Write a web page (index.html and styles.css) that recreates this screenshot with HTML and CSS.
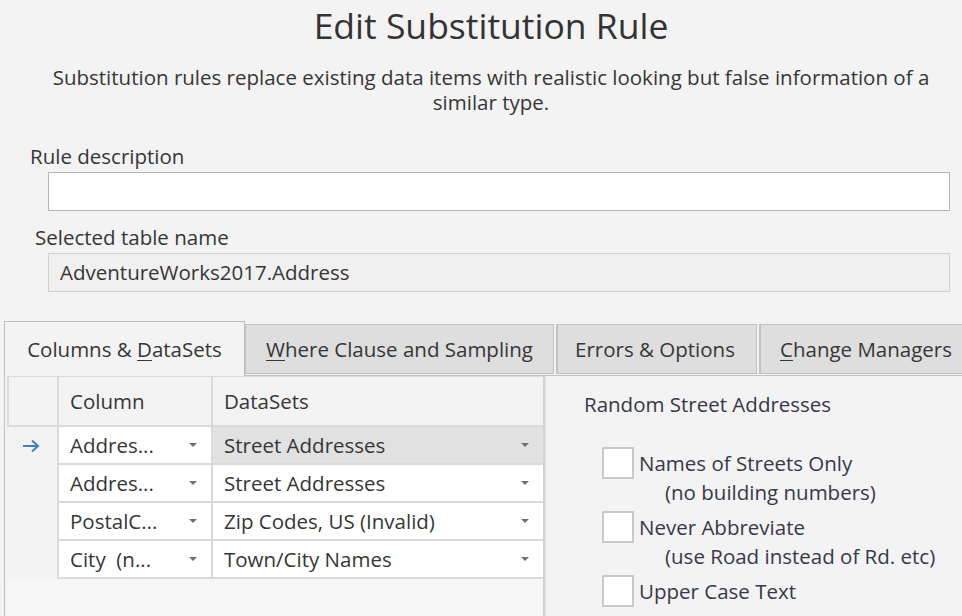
FILE: index.html
```html
<!DOCTYPE html>
<html>
<head>
<meta charset="utf-8">
<link rel="stylesheet" href="styles.css">
</head>
<body>
<div class="dialog">
  <header class="header">
    <h1 class="title">Edit Substitution Rule</h1>
    <p class="subtitle">Substitution rules replace existing data items with realistic looking but false information of a<br>similar type.</p>
  </header>
  <section class="fields">
    <div class="label label-rule">Rule description</div>
    <div class="textbox"></div>
    <div class="label label-table">Selected table name</div>
    <div class="textbox readonly">AdventureWorks2017.Address</div>
  </section>
  <section class="tabs">
    <div class="tabstrip">
      <div class="tab active">Columns &amp; <u>D</u>ataSets</div>
      <div class="tab t-where"><u>W</u>here Clause and Sampling</div>
      <div class="tab t-errors">Errors &amp; Options</div>
      <div class="tab t-change"><u>C</u>hange Managers</div>
    </div>
    <div class="panel">
      <div class="grid">
        <div class="cell rh head"></div>
        <div class="cell head">Column</div>
        <div class="cell head">DataSets</div>

        <div class="cell rh"><svg class="arrow" width="18" height="14" viewBox="0 0 18 14"><path d="M1 7H16M10 1.5L16 7L10 12.5" fill="none" stroke="#3b7fd4" stroke-width="2"/></svg></div>
        <div class="cell data"><span>Addres...</span><i class="dd"></i></div>
        <div class="cell data sel"><span>Street Addresses</span><i class="dd"></i></div>

        <div class="cell rh"></div>
        <div class="cell data"><span>Addres...</span><i class="dd"></i></div>
        <div class="cell data"><span>Street Addresses</span><i class="dd"></i></div>

        <div class="cell rh"></div>
        <div class="cell data"><span>PostalC...</span><i class="dd"></i></div>
        <div class="cell data"><span>Zip Codes, US (Invalid)</span><i class="dd"></i></div>

        <div class="cell rh"></div>
        <div class="cell data"><span>City&nbsp; (n...</span><i class="dd"></i></div>
        <div class="cell data"><span>Town/City Names</span><i class="dd"></i></div>
      </div>
      <div class="options">
        <div class="opt-title">Random Street Addresses</div>
        <div class="check">
          <span class="box"></span>
          <div class="check-text">Names of Streets Only<span class="sub">(no building numbers)</span></div>
        </div>
        <div class="check">
          <span class="box"></span>
          <div class="check-text">Never Abbreviate<span class="sub">(use Road instead of Rd. etc)</span></div>
        </div>
        <div class="check">
          <span class="box"></span>
          <div class="check-text">Upper Case Text</div>
        </div>
      </div>
    </div>
  </section>
</div>
</body>
</html>
```
FILE: styles.css
```css
html, body {
  margin: 0;
  padding: 0;
  background: #f3f3f3;
}
body {
  width: 962px;
  height: 616px;
  overflow: hidden;
  font-family: "Open Sans", "Noto Sans", sans-serif;
  color: #363636;
}
.dialog {
  width: 982px;
}
.header {
  text-align: center;
}
.title {
  margin: 0;
  padding-top: 2px;
  font-weight: normal;
  font-size: 35.5px;
  line-height: 46px;
  color: #333;
}
.subtitle {
  margin: 17px 0 0;
  font-size: 20.5px;
  line-height: 25px;
}
.fields {
  display: flex;
  flex-direction: column;
  padding-top: 28px;
}
.label {
  font-size: 20.5px;
  line-height: 26px;
}
.label-rule {
  margin-left: 30px;
}
.label-table {
  margin-left: 35px;
  margin-top: 13px;
}
.textbox {
  margin: 3px 0 0 48px;
  width: 900px;
  height: 37px;
  border: 1px solid #b4b4b4;
  background: #fff;
  box-sizing: content-box;
}
.textbox.readonly {
  margin-top: 3px;
  background: #f0f0f0;
  border-color: #cfcfcf;
  height: 37px;
  font-size: 20.5px;
  line-height: 37px;
  padding-left: 11px;
  width: 889px;
}
.tabs {
  margin-top: 29px;
  margin-left: 4px;
}
.tabstrip {
  display: flex;
  align-items: flex-end;
  height: 55px;
}
.tab {
  font-size: 20.5px;
  box-sizing: border-box;
  height: 50px;
  line-height: 48px;
  border: 1px solid #c2c2c2;
  background: #dedede;
  text-align: center;
  white-space: nowrap;
  margin-bottom: 2px;
}
.tab.active {
  width: 241px;
  height: 55px;
  line-height: 54px;
  background: #f3f3f3;
  border-color: #bdbdbd;
  border-bottom: none;
  margin-bottom: 0;
  position: relative;
  z-index: 1;
}
.t-where { width: 309px; }
.t-errors { width: 201px; margin-left: 2px; border-left-width: 2px; padding-right: 4px; }
.t-change { width: 210px; margin-left: 2px; border-left-width: 2px; text-align: left; padding-left: 19px; }
.tab u {
  text-decoration-thickness: 1px;
  text-underline-offset: 3px;
}
.panel {
  display: flex;
  border-left: 1px solid #bdbdbd;
  border-top: 1px solid #c2c2c2;
  margin-top: -1px;
  height: 240px;
}
.grid {
  margin-left: 2px;
  display: grid;
  grid-template-columns: 50px 154px 332px;
  grid-template-rows: 51px 38px 38px 38px 38px;
  align-self: flex-start;
  border-right: 2px solid #d2d2d2;
  height: 240px;
  align-content: start;
  box-sizing: border-box;
  background: #f6f6f6;
}
.cell {
  box-sizing: border-box;
  border-left: 2px solid #dadada;
  border-bottom: 2px solid #dadada;
  font-size: 20.5px;
  display: flex;
  align-items: center;
  padding-left: 11px;
  color: #363636;
}
.cell.head {
  border-top: 1px solid #dadada;
  background: #f3f3f3;
}
.cell.rh {
  background: #f3f3f3;
  justify-content: center;
  padding-left: 0;
  border-left: none;
  border-bottom: none;
}
.cell.rh.head {
  border-left: 2px solid #dadada;
  border-bottom: 2px solid #dadada;
}
.cell.data {
  background: #fff;
  justify-content: space-between;
  padding-right: 14px;
}
.cell.data.sel {
  background: #e1e1e1;
}
.dd {
  width: 0;
  height: 0;
  border-left: 4px solid transparent;
  border-right: 4px solid transparent;
  border-top: 4px solid #707070;
}
.arrow {
  margin-left: 2px;
  margin-right: 4px;
}
.options {
  flex: 1;
  border-left: 1px solid #e4e4e4;
  padding-left: 38px;
  color: #373849;
}
.opt-title {
  font-size: 20.5px;
  line-height: 26px;
  margin-top: 15px;
}
.check {
  display: flex;
  align-items: flex-start;
  margin-left: 18px;
}
.opt-title + .check { margin-top: 30px; }
.check + .check { margin-top: 6px; }
.box {
  flex: none;
  width: 28px;
  height: 28px;
  border: 2px solid #c9c9c9;
  background: #fff;
  margin-right: 5px;
}
.check-text {
  font-size: 20.5px;
  line-height: 32px;
  display: flex;
  flex-direction: column;
}
.sub {
  padding-left: 26px;
  line-height: 26px;
}
```
